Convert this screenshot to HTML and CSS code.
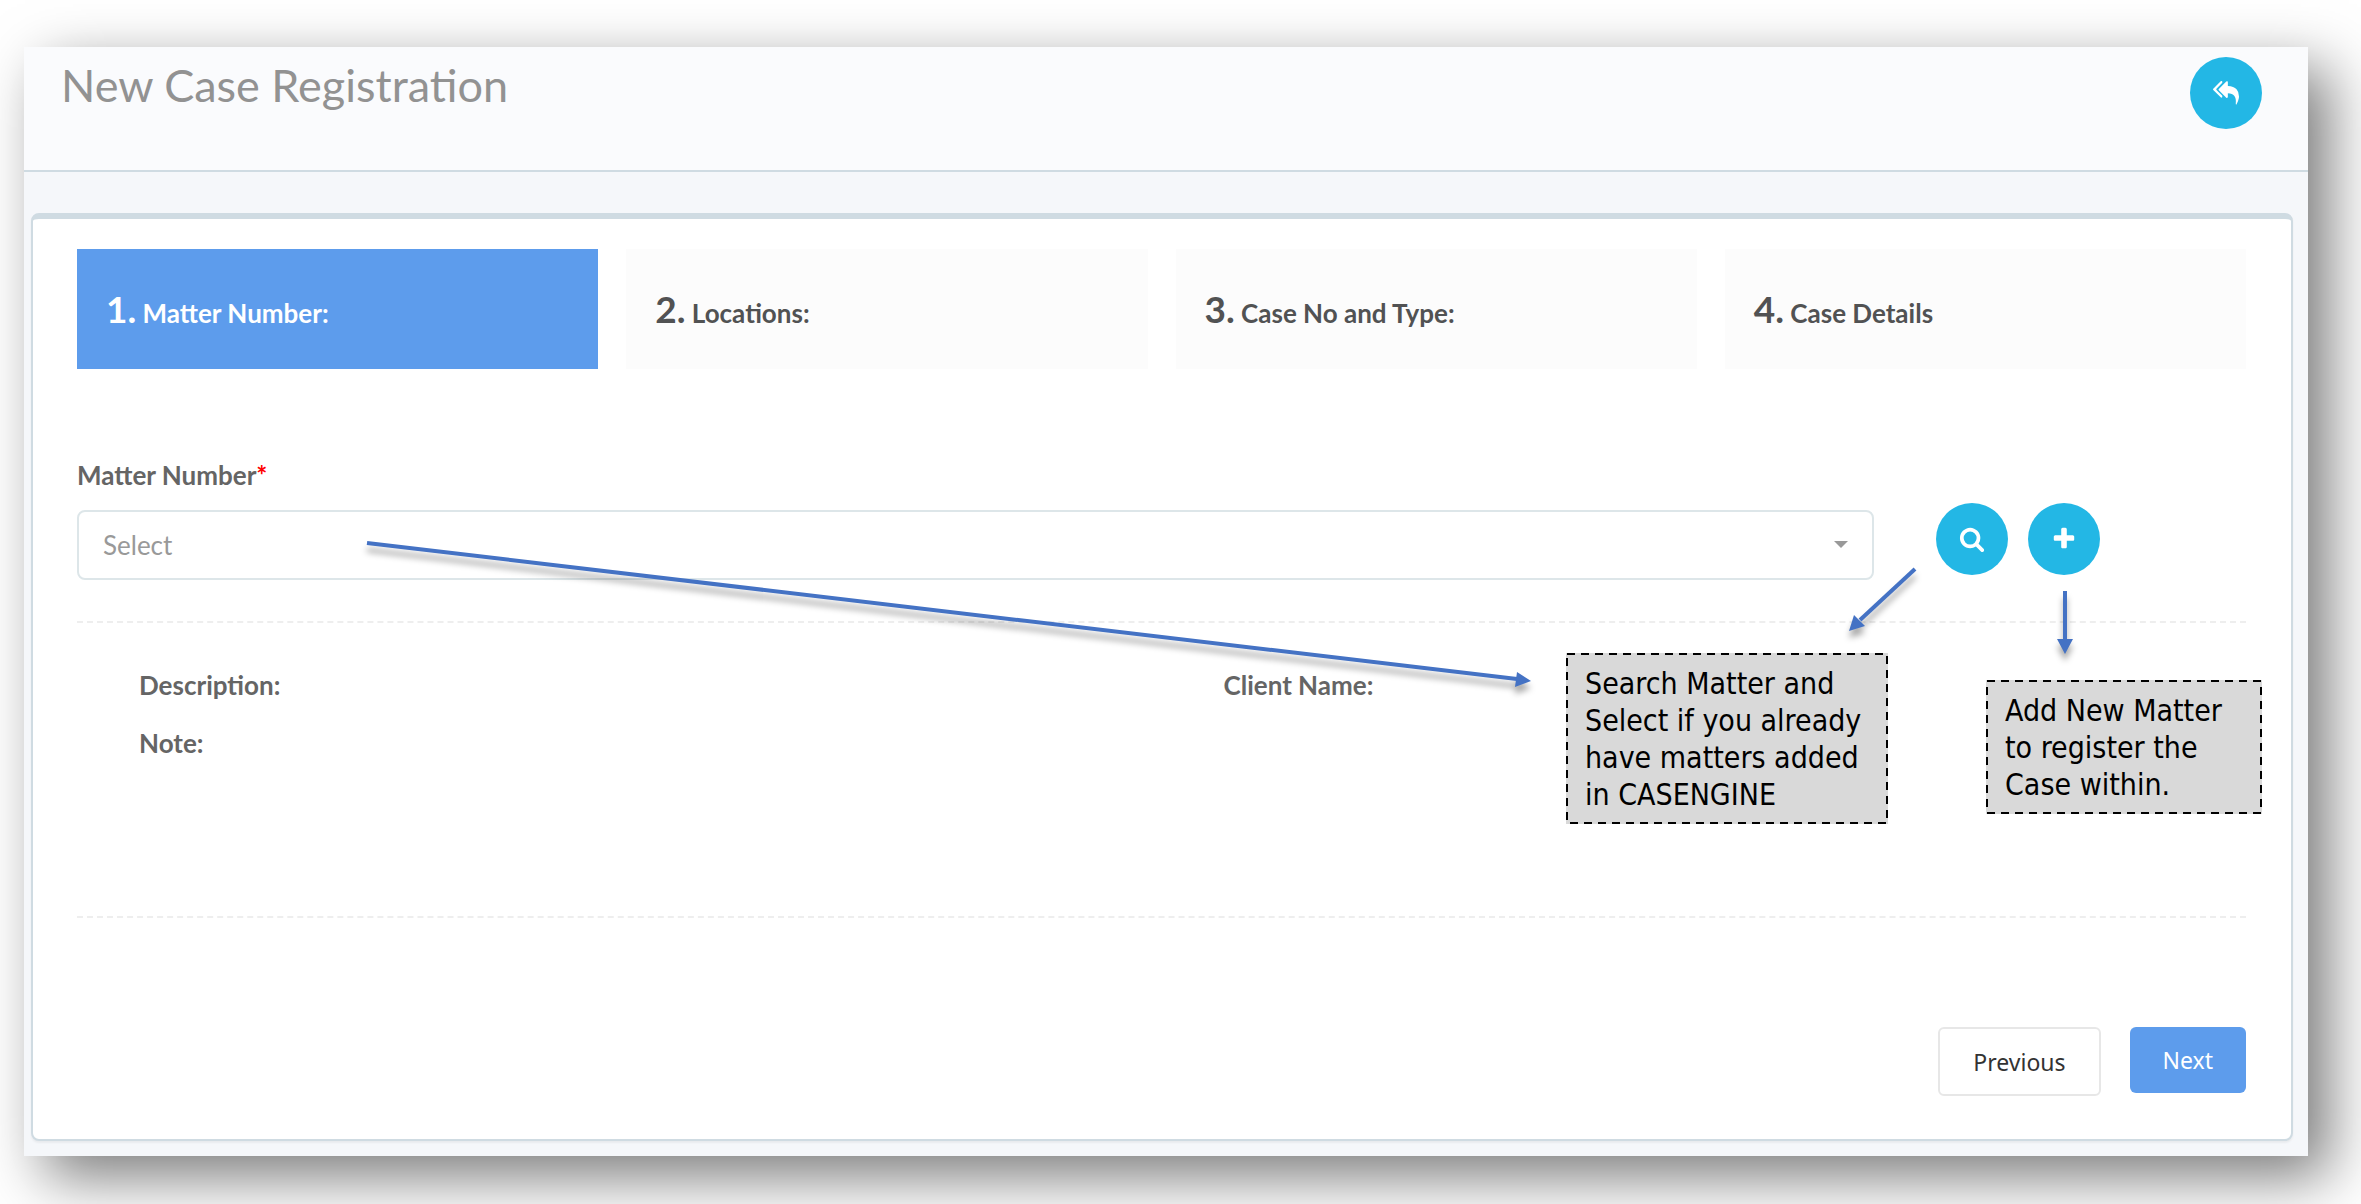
FILE: index.html
```html
<!DOCTYPE html>
<html lang="en">
<head>
<meta charset="utf-8">
<title>New Case Registration</title>
<link rel="stylesheet" href="styles.css">
</head>
<body>
<main class="frame">
  <header class="page-head">
    <h1 class="page-title">New Case Registration</h1>
    <button class="round-btn" type="button" aria-label="Back">
      <svg class="icon" viewBox="0 0 1792 1792" aria-hidden="true"><path d="M640 1082v70q0 42-39 59-13 5-25 5-27 0-45-19l-512-512q-19-19-19-45t19-45l512-512q29-31 70-14 39 17 39 59v69l-397 398q-19 19-19 45t19 45zm1152 58q0 58-17 133.500t-38.500 138-48 125-40.500 90.500l-20 40q-8 17-28 17-6 0-9-1-25-8-23-34 43-400-106-565-64-71-170.500-110.500t-267.500-52.500v251q0 42-39 59-13 5-25 5-27 0-45-19l-512-512q-19-19-19-45t19-45l512-512q29-31 70-14 39 17 39 59v262q411 28 599 221 169 173 169 509z"/></svg>
    </button>
  </header>

  <form class="card">
    <nav aria-label="Registration steps">
      <ol class="steps">
        <li><a class="step step-active" href="#matter" aria-current="step"><span class="step-no">1.</span> Matter Number:</a></li>
        <li><a class="step" href="#locations"><span class="step-no">2.</span> Locations:</a></li>
        <li><a class="step" href="#case-type"><span class="step-no">3.</span> Case No and Type:</a></li>
        <li><a class="step" href="#details"><span class="step-no">4.</span> Case Details</a></li>
      </ol>
    </nav>

    <section class="matter" id="matter">
      <label class="field-label" for="matter-number">Matter Number<span class="required">*</span></label>
      <div class="field-row">
        <div class="select-box">
          <select class="select" id="matter-number"><option>Select</option></select>
          <svg class="caret" viewBox="0 0 14 7" aria-hidden="true"><path d="M0 0h14l-7 7z"/></svg>
        </div>
        <div class="field-actions">
          <button class="round-btn" type="button" aria-label="Search matter">
            <svg class="icon" viewBox="0 0 1792 1792" aria-hidden="true"><path d="M1216 832q0-185-131.500-316.500T768 384 451.500 515.500 320 832t131.500 316.500T768 1280t316.500-131.500T1216 832zm512 832q0 52-38 90t-90 38q-54 0-90-38l-343-342q-179 124-399 124-143 0-273.500-55.500t-225-150-150-225T64 832t55.500-273.500 150-225 225-150T768 128t273.500 55.500 225 150 150 225T1472 832q0 220-124 399l343 343q37 37 37 90z"/></svg>
          </button>
          <button class="round-btn" type="button" aria-label="Add new matter">
            <svg class="icon" viewBox="0 0 1792 1792" aria-hidden="true"><path d="M1600 736v192q0 40-28 68t-68 28h-416v416q0 40-28 68t-68 28H800q-40 0-68-28t-28-68v-416H288q-40 0-68-28t-28-68V736q0-40 28-68t68-28h416V224q0-40 28-68t68-28h192q40 0 68 28t28 68v416h416q40 0 68 28t28 68z"/></svg>
          </button>
        </div>
      </div>
    </section>

    <dl class="summary">
      <div><dt>Description:</dt></div>
      <div><dt>Client Name:</dt></div>
      <div><dt>Note:</dt></div>
    </dl>

    <div class="actions">
      <button class="btn btn-plain" type="button">Previous</button>
      <button class="btn btn-primary" type="submit">Next</button>
    </div>
  </form>

  <svg class="arrows" viewBox="0 0 1960 160" aria-hidden="true">
    <g class="arrow"><path class="shaft" d="M19 23L1169 159"/><path class="head" d="M1183 161l-14-9-2 15z"/></g>
    <g class="arrow"><path class="shaft" d="M1567 49L1512 100"/><path class="head" d="M1501 111l5-16 11 11z"/></g>
    <g class="arrow"><path class="shaft" d="M1717 71V120"/><path class="head" d="M1717 134l-8-15h16z"/></g>
  </svg>
  <aside class="callout callout-search">
    <svg class="outline" aria-hidden="true"><rect x="1" y="1"/></svg>
    Search Matter and<br>Select if you already<br>have matters added<br>in CASENGINE
  </aside>
  <aside class="callout callout-add">
    <svg class="outline" aria-hidden="true"><rect x="1" y="1"/></svg>
    Add New Matter<br>to register the<br>Case within.
  </aside>
</main>
</body>
</html>
```
FILE: styles.css
```css
* { box-sizing: border-box; }

body {
  margin: 0;
  padding: 47px 53px 48px 24px;
  background: #fff;
  color: #515253;
  font: 26px/32px Lato, sans-serif;
}

.frame {
  position: relative;
  padding-bottom: 15px;
  background: #f5f7fa;
  box-shadow: 21px 21px 56px rgba(0, 0, 0, .52);
}

.page-head {
  display: flex;
  justify-content: space-between;
  align-items: flex-start;
  height: 125px;
  padding: 10px 46px 0 37px;
  background: #fafbfd;
  border-bottom: 2px solid #cfdbe2;
}

.page-title {
  margin: 0;
  color: #929292;
  font-size: 45px;
  font-weight: 400;
  line-height: 56px;
}

.round-btn {
  display: flex;
  align-items: center;
  justify-content: center;
  width: 72px;
  height: 72px;
  padding: 0;
  border: 0;
  border-radius: 50%;
  background: #23b7e5;
}

.icon {
  width: 26px;
  height: 26px;
  fill: #fff;
}

.card {
  margin: 41px 15px 0 7px;
  padding: 30px 45px 43px 44px;
  background: #fff;
  border: 2px solid #cfdbe2;
  border-top-width: 6px;
  border-radius: 8px;
  box-shadow: 0 2px 2px rgba(0, 0, 0, .05);
}

.steps {
  display: grid;
  grid-template-columns: repeat(4, 1fr);
  gap: 28px;
  margin: 0;
  padding: 0;
  list-style: none;
}

.step {
  display: block;
  height: 120px;
  padding: 38px 29px;
  background: #fcfcfc;
  color: #515253;
  font-weight: 700;
  line-height: 44px;
  text-decoration: none;
}

.step-active {
  background: #5d9cec;
  color: #fff;
}

.step-no { font-size: 37px; }

.matter {
  padding: 90px 0 41px;
  border-bottom: 2px dashed #eee;
}

.field-label {
  display: block;
  color: #656565;
  font-weight: 700;
}

.required { color: #f00; }

.field-row {
  display: flex;
  align-items: flex-start;
  margin-top: 12px;
}

.select-box {
  position: relative;
  flex: 1;
  margin-top: 7px;
}

.select {
  display: block;
  width: 100%;
  height: 70px;
  padding: 0 24px;
  appearance: none;
  background: #fff;
  border: 2px solid #dde6e9;
  border-radius: 8px;
  color: #999;
  font: inherit;
}

.caret {
  position: absolute;
  top: 31px;
  right: 26px;
  width: 14px;
  height: 7px;
  fill: #999;
  pointer-events: none;
}

.field-actions {
  display: flex;
  gap: 20px;
  padding: 0 146px 0 62px;
}

.summary {
  display: grid;
  grid-template-columns: 1fr 1fr;
  row-gap: 26px;
  height: 295px;
  margin: 0;
  padding-top: 46px;
  align-content: start;
  border-bottom: 2px dashed #eee;
  color: #656565;
  font-weight: 700;
}

.summary div { padding-left: 62px; }

.actions {
  display: flex;
  justify-content: flex-end;
  align-items: flex-start;
  gap: 29px;
  padding-top: 109px;
}

.btn {
  height: 66px;
  padding: 0 33px;
  border: 0;
  border-radius: 6px;
  font: 23px/32px "Noto Sans", sans-serif;
}

.btn-plain {
  height: 69px;
  background: #fff;
  border: 2px solid #e7e7e7;
  color: #333;
}

.btn-primary {
  background: #5d9cec;
  color: #fff;
}

/* Guide notes laid over the form */
.arrows {
  position: absolute;
  top: 473px;
  right: 0;
  width: 1960px;
  height: 160px;
  overflow: visible;
  pointer-events: none;
}

.arrow { filter: drop-shadow(0 7px 3px rgba(0, 0, 0, .35)); }

.shaft {
  fill: none;
  stroke: #4472c4;
  stroke-width: 4;
}

.head { fill: #4472c4; }

.callout {
  position: absolute;
  padding: 12px 16px 11px 19px;
  background: #d9d9d9;
  color: #000;
  font: 30px/37px "DejaVu Sans Condensed", sans-serif;
  white-space: nowrap;
}

.callout-search {
  top: 606px;
  right: 420px;
  width: 322px;
}

.callout-add {
  top: 633px;
  right: 46px;
  width: 276px;
}

.outline {
  position: absolute;
  inset: 0;
  width: 100%;
  height: 100%;
}

.outline rect {
  width: calc(100% - 2px);
  height: calc(100% - 2px);
  fill: none;
  stroke: #000;
  stroke-width: 2;
  stroke-dasharray: 8 6;
}
```
